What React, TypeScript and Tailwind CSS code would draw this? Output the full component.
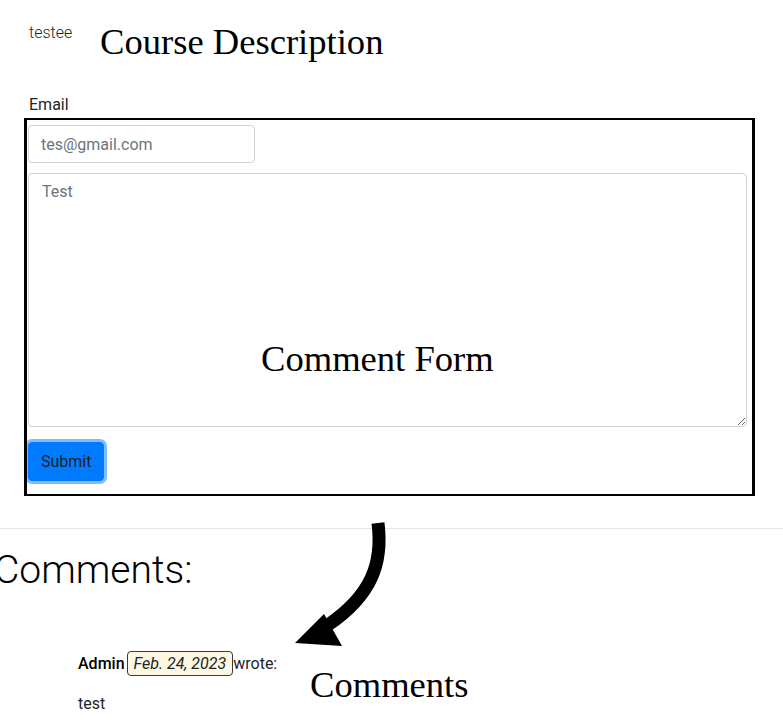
import React from "react";

export default function App() {
  return (
    <div className="relative min-h-[720px] w-[783px] overflow-hidden bg-white font-['Roboto',sans-serif] font-normal text-[16px] leading-6 text-[#212529]">
      <div className="pl-[29px] pt-[21px]">
        <div className="font-light">testee</div>
        <label className="mt-12 block">Email</label>
      </div>

      <form className="ml-[24px] mt-[1px] w-[731px] overflow-hidden border-x-[3px] border-y-2 border-black pb-[13px] pl-[1px] pt-[5px]">
        <input
          type="text"
          placeholder="tes@gmail.com"
          className="block h-[38px] w-[227px] rounded-[4px] border border-[#ced4da] px-3 py-1.5 font-normal placeholder:text-[#6c757d] outline-none"
        />
        <textarea
          placeholder="Test"
          className="mt-[10px] block h-[254px] w-[719px] rounded-[4px] border border-[#ced4da] px-[13px] py-1.5 font-normal placeholder:text-[#6c757d] outline-none"
        />
        <button
          type="button"
          className="mt-[15px] block h-[39px] rounded-[4px] border border-[#007bff] bg-[#007bff] px-3 font-normal text-[#1b1f2a] ring-[3px] ring-[#80bdff]"
        >
          Submit
        </button>
      </form>

      <hr className="mt-[32px] border-t border-[#e6e6e6]" />

      <h1 className="ml-[-6px] mt-[18px] text-[39px] font-light leading-[1.2] text-black">Comments:</h1>

      <div className="ml-[78px] mt-[58px]">
        <div>
          <strong className="mr-[2px] font-medium text-black">Admin</strong>
          <mark className="rounded-[4px] border border-[#3a3a3a] bg-[#fcf8e3] px-[6px] py-[2px] font-normal italic text-[#212529]">
            Feb. 24, 2023
          </mark>
          <span className="font-normal">wrote:</span>
        </div>
        <p className="mt-[16px] font-normal">test</p>
      </div>

      {/* annotations */}
      <div className="absolute left-[100px] top-[24px] font-['Liberation_Serif',serif] text-[36.6px] font-normal leading-none text-black">
        Course Description
      </div>
      <div className="absolute left-[261px] top-[341px] font-['Liberation_Serif',serif] text-[36.6px] font-normal leading-none text-black">
        Comment Form
      </div>
      <div className="absolute left-[310px] top-[667px] font-['Liberation_Serif',serif] text-[36.6px] font-normal leading-none text-black">
        Comments
      </div>
      <svg className="absolute left-[280px] top-[515px]" width="120" height="140" viewBox="0 0 120 140">
        <path d="M98 8 C103 48 92 80 48 110" fill="none" stroke="#000" strokeWidth="13" />
        <polygon points="44,99 15,128 62,131" fill="#000" />
      </svg>
    </div>
  );
}
